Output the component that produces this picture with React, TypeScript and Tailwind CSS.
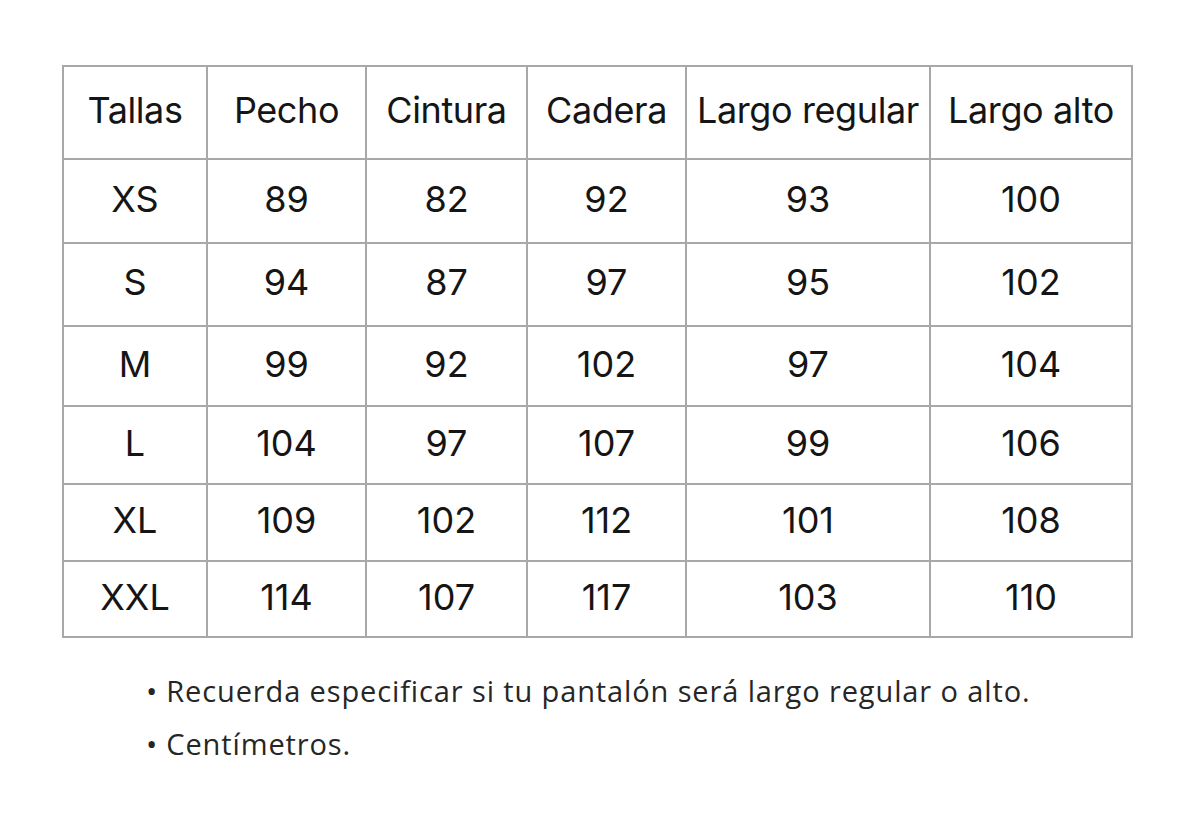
const headers = ['Tallas', 'Pecho', 'Cintura', 'Cadera', 'Largo regular', 'Largo alto'];
const widths = [144, 159, 161, 159, 244, 202];
const rows = [
  ['XS', '89', '82', '92', '93', '100'],
  ['S', '94', '87', '97', '95', '102'],
  ['M', '99', '92', '102', '97', '104'],
  ['L', '104', '97', '107', '99', '106'],
  ['XL', '109', '102', '112', '101', '108'],
  ['XXL', '114', '107', '117', '103', '110'],
];
const rowHeights = [84, 83, 80, 78, 77, 76];

export default function App() {
  return (
    <div className="w-[1200px] h-[817px] bg-white pt-[65px] pl-[62px] font-['Inter',sans-serif] text-[#151515]">
      <table className="border-collapse table-fixed w-[1069px]">
        <colgroup>
          {widths.map((w, i) => (
            <col key={i} style={{ width: w }} />
          ))}
        </colgroup>
        <thead>
          <tr className="h-[93px]">
            {headers.map((h) => (
              <th key={h} className="border-2 border-[#a8a8a8] text-center font-normal text-[36px] tracking-[-0.4px] p-0 pb-[5px]">
                {h}
              </th>
            ))}
          </tr>
        </thead>
        <tbody>
          {rows.map((r, ri) => (
            <tr key={r[0]} style={{ height: rowHeights[ri] }}>
              {r.map((c, ci) => (
                <td key={ci} className="border-2 border-[#a8a8a8] text-center text-[36px] p-0 pb-[5px]">
                  {c}
                </td>
              ))}
            </tr>
          ))}
        </tbody>
      </table>
      <ul className="mt-[26px] ml-[84px] font-['Open_Sans',sans-serif] text-[29px] tracking-[0.88px] text-[#262626] leading-[53px]">
        <li className="flex items-center gap-[9px]">
          <span className="text-[30px] tracking-normal">•</span>
          Recuerda especificar si tu pantalón será largo regular o alto.
        </li>
        <li className="flex items-center gap-[9px]">
          <span className="text-[30px] tracking-normal">•</span>
          Centímetros.
        </li>
      </ul>
    </div>
  );
}
